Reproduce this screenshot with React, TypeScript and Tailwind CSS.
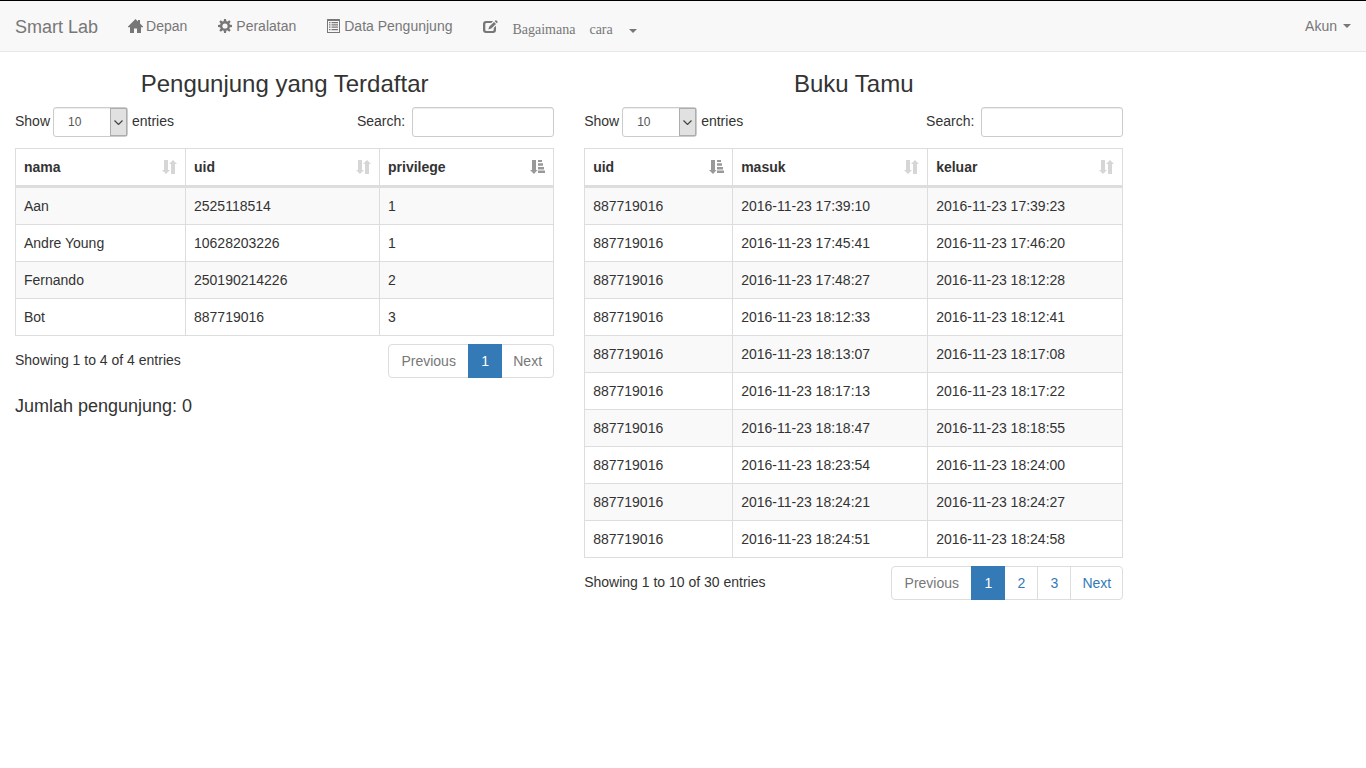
import React from "react";

type IconProps = { className?: string };

function HomeIcon() {
  return (
    <svg className="h-[14px] w-[15px]" viewBox="0 0 15 14" fill="currentColor" aria-hidden="true">
      <path d="M7.5 0L10 2.500V1h2v3.500L15 7.500v.7h-2V14H9V9.500H6V14H2V8.200H0v-.7Z" />
    </svg>
  );
}

const gearTeeth = [0, 45, 90, 135, 180, 225, 270, 315];

function CogIcon() {
  return (
    <svg className="h-[14px] w-[14px]" viewBox="0 0 14 14" fill="currentColor" aria-hidden="true">
      <circle cx="7" cy="7" r="3.800" fill="none" stroke="currentColor" strokeWidth="2.400" />
      {gearTeeth.map((angle) => (
        <path key={angle} d="M5.600 2.800L6 0h2l.4 2.800Z" transform={`rotate(${angle} 7 7)`} />
      ))}
    </svg>
  );
}

function ListIcon() {
  return (
    <svg className="h-[14px] w-[13px]" viewBox="0 0 13 14" fill="currentColor" aria-hidden="true">
      <path fillRule="evenodd" d="M.5 0h12a.5.5 0 0 1 .5.5v13a.5.5 0 0 1-.5.5H.5a.5.5 0 0 1-.5-.5V.5A.5.5 0 0 1 .5 0ZM1 2v11h11V2Z" />
      <path d="M2 3h1.500v1.300H2zM4.500 3H11v1.300H4.500zM2 5.300h1.500v1.200H2zM4.500 5.300H11v1.200H4.500zM2 7.500h1.500v1.300H2zM4.500 7.500H11v1.300H4.500zM2 10h1.500v1.300H2zM4.500 10H11v1.300H4.500z" />
    </svg>
  );
}

function EditIcon() {
  return (
    <svg className="h-[14px] w-[15px]" viewBox="0 0 15 14" fill="currentColor" aria-hidden="true">
      <path d="M3 1h7L8.300 3H3.600A1.300 1.300 0 0 0 2.300 4.300v5.400A1.300 1.300 0 0 0 3.600 11h5.800a1.300 1.300 0 0 0 1.300-1.300V8l2.300-2.300V10a3 3 0 0 1-3 3H3a3 3 0 0 1-3-3V4a3 3 0 0 1 3-3Z" />
      <path d="M11 1.900l2 2-4.700 4.700-3 1 1-3ZM11.700 1.200l1-1a.4.4 0 0 1 .5 0l1.500 1.500a.4.4 0 0 1 0 .5l-1 1Z" />
    </svg>
  );
}

function SortIcon({ className }: IconProps) {
  return (
    <svg className={className} viewBox="0 0 15 14" fill="currentColor" aria-hidden="true">
      <path d="M2 0h4v10h2l-4 4-4-4h2ZM9 14h4V4h2l-4-4-4 4h2Z" />
    </svg>
  );
}

function SortAscIcon({ className }: IconProps) {
  return (
    <svg className={className} viewBox="0 0 15 14" fill="currentColor" aria-hidden="true">
      <path d="M2 0h4v10h1.500L4 14 0 10h2ZM8 0h4v2H8zM8 3.300h5v2.400H8zM8 7h6v2.400H8zM8 10.600h7V13H8z" />
    </svg>
  );
}

function Caret({ className }: IconProps) {
  return (
    <svg className={className} viewBox="0 0 8 4" fill="currentColor" aria-hidden="true">
      <path d="M0 0h8L4 4Z" />
    </svg>
  );
}

type Column = { label: string; width: string; sorted?: boolean };

type DataTableProps = {
  id: string;
  title: string;
  columns: Column[];
  rows: string[][];
  info: string;
  pages: number;
};

function Pagination({ pages }: { pages: number }) {
  const more = Array.from({ length: pages - 1 }, (_, i) => i + 2);
  const nextColor = pages > 1 ? "text-[#337ab7]" : "text-[#777]";
  return (
    <nav aria-label="Pagination" className="flex text-center leading-5">
      <a href="#" className="w-[81px] rounded-l border border-[#ddd] py-1.5 text-[#777]">
        Previous
      </a>
      <a href="#" aria-current="page" className="z-10 -ml-px w-[34px] border border-[#337ab7] bg-[#337ab7] py-1.5 text-white">
        1
      </a>
      {more.map((page) => (
        <a key={page} href="#" className="-ml-px w-[34px] border border-[#ddd] py-1.5 text-[#337ab7]">
          {page}
        </a>
      ))}
      <a href="#" className={`-ml-px w-[53px] rounded-r border border-[#ddd] py-1.5 ${nextColor}`}>
        Next
      </a>
    </nav>
  );
}

function DataTable({ id, title, columns, rows, info, pages }: DataTableProps) {
  return (
    <section>
      <h3 className="mb-2.5 text-center text-2xl leading-[26px]">{title}</h3>
      <div className="mb-[11px] flex items-center justify-between">
        <div className="flex items-center gap-1">
          <label htmlFor={`${id}-length`} className="w-[34px] pb-0.5">
            Show
          </label>
          <span className="relative flex">
            <select
              id={`${id}-length`}
              defaultValue="10"
              className="h-[30px] w-[75px] appearance-none rounded-[3px] border border-[#ccc] bg-white pl-3.5 text-xs text-[#555] shadow-[inset_0_1px_1px_rgba(0,0,0,0.075)]"
            >
              <option>10</option>
              <option>25</option>
              <option>50</option>
              <option>100</option>
            </select>
            <span className="pointer-events-none absolute inset-y-px right-px flex w-[17px] items-center justify-center border border-[#adadad] bg-[#e1e1e1] text-[#444]">
              <svg className="h-[5px] w-[9px]" viewBox="0 0 9 5" fill="none" stroke="currentColor" strokeWidth="1.2" aria-hidden="true">
                <path d="M.5.5l4 4 4-4" />
              </svg>
            </span>
          </span>
          <span className="pb-0.5">entries</span>
        </div>
        <div className="flex items-center gap-[7px]">
          <label htmlFor={`${id}-search`} className="pb-0.5">
            Search:
          </label>
          <input
            id={`${id}-search`}
            type="search"
            className="h-[30px] w-[142px] rounded-[3px] border border-[#ccc] bg-white px-2.5 text-xs shadow-[inset_0_1px_1px_rgba(0,0,0,0.075)]"
          />
        </div>
      </div>
      <table className="mb-2 w-full table-fixed border-separate border-spacing-0 border-t border-l border-[#ddd]">
        <thead>
          <tr>
            {columns.map((column) => (
              <th key={column.label} className={`border-r border-b-3 border-[#ddd] p-2 text-left font-bold ${column.width}`}>
                <div className="flex items-center justify-between">
                  {column.label}
                  {column.sorted ? (
                    <SortAscIcon className="h-[14px] w-[15px] text-[#999]" />
                  ) : (
                    <SortIcon className="h-[14px] w-[15px] text-[#d6d6d6]" />
                  )}
                </div>
              </th>
            ))}
          </tr>
        </thead>
        <tbody>
          {rows.map((row, index) => (
            <tr key={index} className="odd:bg-[#f9f9f9]">
              {row.map((cell, i) => (
                <td key={i} className="border-r border-b border-[#ddd] p-2">
                  {cell}
                </td>
              ))}
            </tr>
          ))}
        </tbody>
      </table>
      <div className="flex items-center justify-between">
        <p className="pb-0.5">{info}</p>
        <Pagination pages={pages} />
      </div>
    </section>
  );
}

const visitorColumns: Column[] = [
  { label: "nama", width: "w-[170px]" },
  { label: "uid", width: "w-[194px]" },
  { label: "privilege", width: "w-auto", sorted: true },
];

const visitors = [
  ["Aan", "2525118514", "1"],
  ["Andre Young", "10628203226", "1"],
  ["Fernando", "250190214226", "2"],
  ["Bot", "887719016", "3"],
];

const guestColumns: Column[] = [
  { label: "uid", width: "w-[148px]", sorted: true },
  { label: "masuk", width: "w-[195px]" },
  { label: "keluar", width: "w-auto" },
];

const guests = [
  ["887719016", "2016-11-23 17:39:10", "2016-11-23 17:39:23"],
  ["887719016", "2016-11-23 17:45:41", "2016-11-23 17:46:20"],
  ["887719016", "2016-11-23 17:48:27", "2016-11-23 18:12:28"],
  ["887719016", "2016-11-23 18:12:33", "2016-11-23 18:12:41"],
  ["887719016", "2016-11-23 18:13:07", "2016-11-23 18:17:08"],
  ["887719016", "2016-11-23 18:17:13", "2016-11-23 18:17:22"],
  ["887719016", "2016-11-23 18:18:47", "2016-11-23 18:18:55"],
  ["887719016", "2016-11-23 18:23:54", "2016-11-23 18:24:00"],
  ["887719016", "2016-11-23 18:24:21", "2016-11-23 18:24:27"],
  ["887719016", "2016-11-23 18:24:51", "2016-11-23 18:24:58"],
];

export default function App() {
  return (
    <div className="min-h-screen bg-white font-['Liberation_Sans',Arial,sans-serif] text-sm leading-5 text-[#333]">
      <header className="flex items-center border-t border-b border-t-black border-b-[#e7e7e7] bg-[#f8f8f8] px-[15px] text-[#777]">
        <a href="#" className="pt-4 pr-[30px] pb-3.5 text-lg leading-5">
          Smart Lab
        </a>
        <nav className="flex flex-1 items-center gap-[31px]">
          <a href="#" className="flex items-center gap-[3px]">
            <HomeIcon />
            Depan
          </a>
          <a href="#" className="flex items-center gap-1">
            <CogIcon />
            Peralatan
          </a>
          <a href="#" className="flex items-center gap-1">
            <ListIcon />
            Data Pengunjung
          </a>
          <button className="flex items-center pt-0.5 font-['Liberation_Serif',serif]">
            <EditIcon />
            <span className="flex gap-3.5 pt-1.5 pl-3.5">
              <span>Bagaimana</span>
              <span>cara</span>
            </span>
            <Caret className="mt-2 ml-4 h-1 w-2" />
          </button>
          <button className="ml-auto flex items-center gap-1.5">
            Akun
            <Caret className="h-1 w-2" />
          </button>
        </nav>
      </header>
      <main className="flex pt-[19px]">
        <div className="w-5/12 px-[15px]">
          <DataTable
            id="visitors"
            title="Pengunjung yang Terdaftar"
            columns={visitorColumns}
            rows={visitors}
            info="Showing 1 to 4 of 4 entries"
            pages={1}
          />
          <h4 className="mt-[18px] text-lg leading-5">Jumlah pengunjung: 0</h4>
        </div>
        <div className="w-5/12 px-[15px]">
          <DataTable
            id="guests"
            title="Buku Tamu"
            columns={guestColumns}
            rows={guests}
            info="Showing 1 to 10 of 30 entries"
            pages={3}
          />
        </div>
      </main>
    </div>
  );
}
